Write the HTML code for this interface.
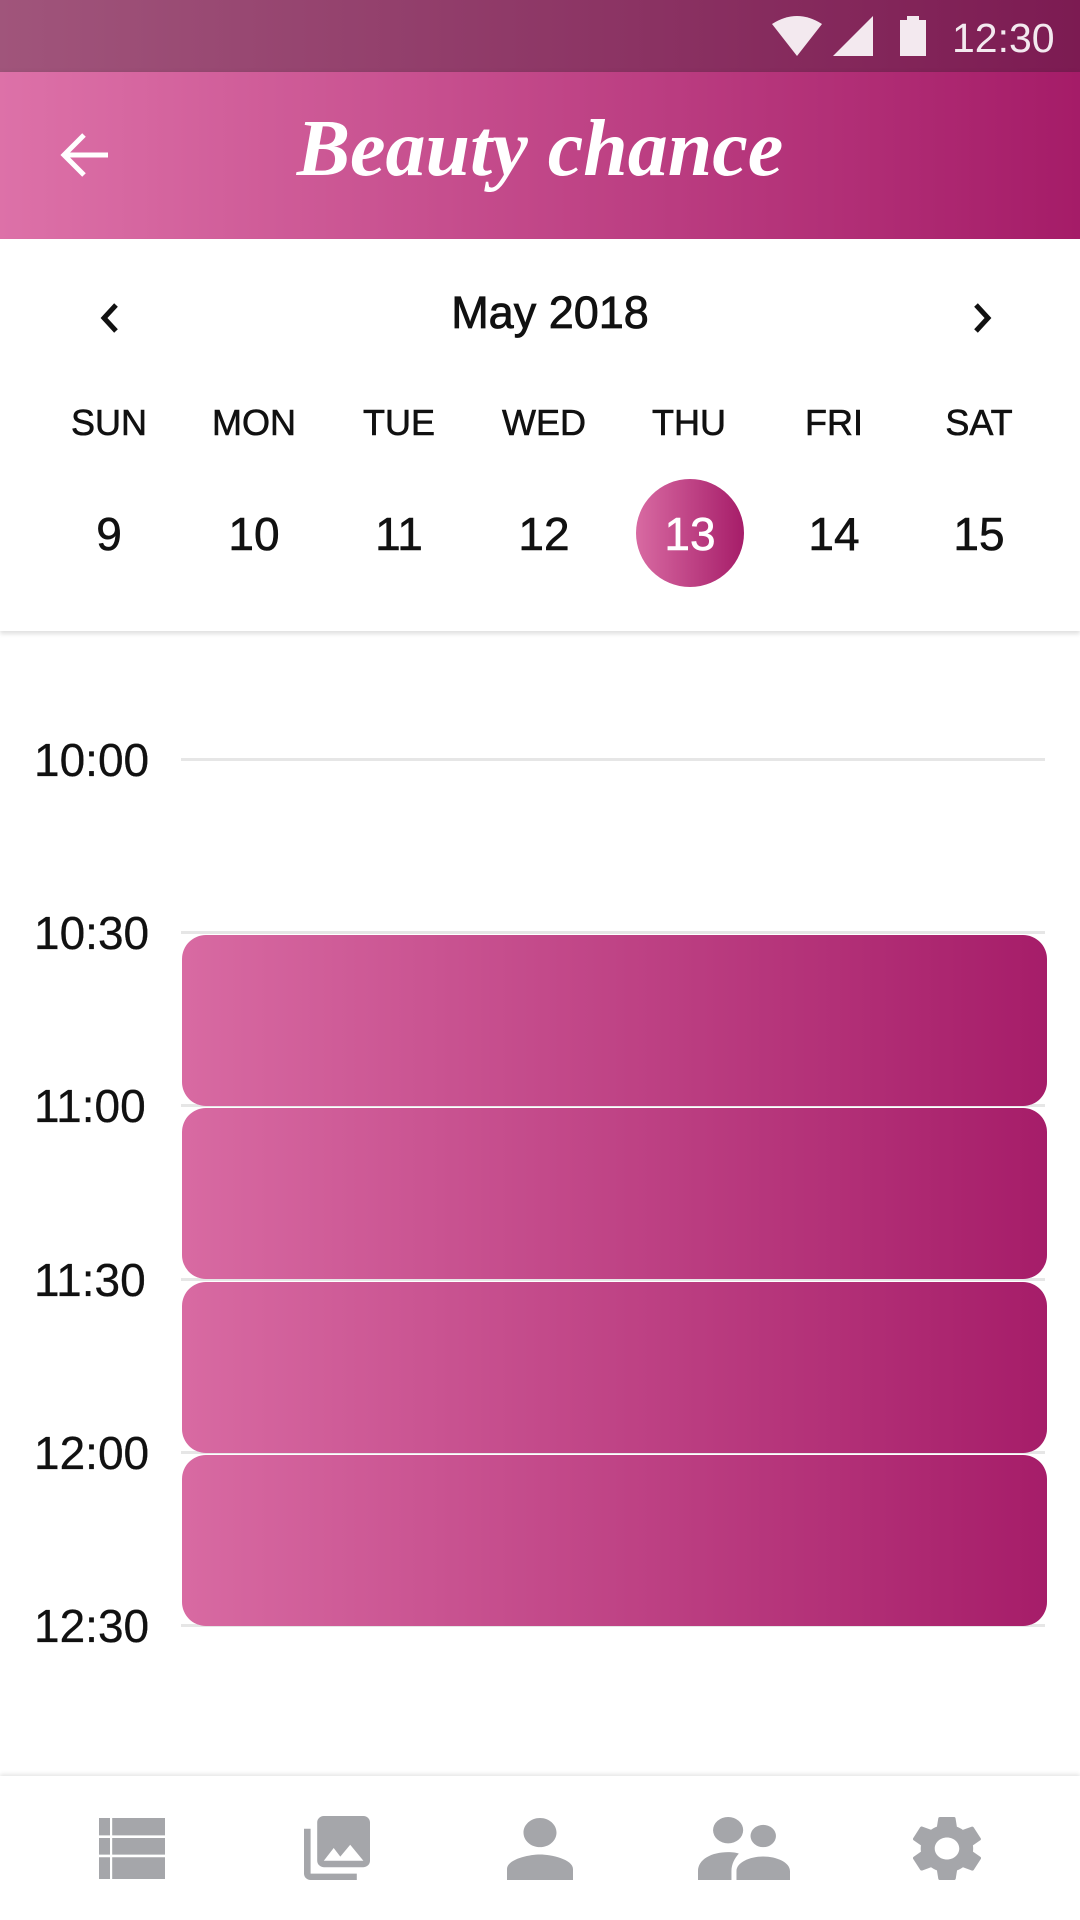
<!DOCTYPE html>
<html><head><meta charset="utf-8"><style>
*{margin:0;padding:0;box-sizing:border-box}
body{width:1080px;height:1920px;position:relative;background:#fff;font-family:"Liberation Sans",sans-serif;overflow:hidden}
.sb{position:absolute;left:0;top:0;width:1080px;height:72px;background:linear-gradient(90deg,#a0557b,#7c1b52)}
.hd{position:absolute;left:0;top:72px;width:1080px;height:167px;background:linear-gradient(90deg,#dd71a8,#a51c68);box-shadow:0 3px 6px rgba(0,0,0,.25)}
.title{position:absolute;left:0;width:1080px;top:32px;text-align:center;color:#fff;font:italic bold 80px "Liberation Serif",serif}
.cal{position:absolute;left:0;top:239px;width:1080px;height:392px;background:#fff;box-shadow:0 3px 4px rgba(0,0,0,.12)}
.t{position:absolute;text-align:center;width:140px;margin-left:-70px;color:#111;-webkit-text-stroke:0.6px #111}
.time{position:absolute;left:34px;font-size:46px;color:#111;-webkit-text-stroke:0.3px #111}
.line{position:absolute;left:181px;width:864px;height:3px;background:#e6e6e6}
.blk{position:absolute;left:182px;width:865px;height:171px;border-radius:24px;background:linear-gradient(90deg,#d86aa2,#a61d69)}
.nav{position:absolute;left:0;top:1776px;width:1080px;height:144px;background:#fff;box-shadow:0 -2px 4px rgba(0,0,0,.1)}
.ic{position:absolute}
</style></head><body>
<div class="sb">
<svg style="position:absolute;left:770px;top:14px" width="290" height="44" viewBox="0 0 290 44">
<path d="M2 10 Q27 -6 52 10 L27 42 Z" fill="#f3e9ef"/>
<path d="M63 42 L103 2 L103 42 Z" fill="#f3e9ef"/>
<rect x="130" y="6" width="26" height="36" fill="#f3e9ef"/><rect x="137" y="2" width="12" height="5" fill="#f3e9ef"/>
<text x="182" y="38" font-family="Liberation Sans" font-size="41" fill="#f3e9ef">12:30</text>
</svg>
</div>
<div class="hd">
<svg style="position:absolute;left:58px;top:58px" width="54" height="50" viewBox="0 0 54 50"><path d="M50 25 H8 M26 5 L6 25 L26 45" stroke="#fff" stroke-width="5" fill="none"/></svg>
<div class="title">Beauty chance</div>
</div>
<div class="cal">
<svg style="position:absolute;left:98px;top:62px" width="24" height="34"><path d="M18 4 L6 17 L18 30" stroke="#111" stroke-width="5" fill="none"/></svg>
<svg style="position:absolute;left:970px;top:62px" width="24" height="34"><path d="M6 4 L18 17 L6 30" stroke="#111" stroke-width="5" fill="none"/></svg>
<div style="position:absolute;left:0;width:1100px;top:48px;text-align:center;font-size:45px;color:#111;-webkit-text-stroke:0.8px #111">May 2018</div>
<div class="t" style="left:109px;top:163px;font-size:36px">SUN</div>
<div class="t" style="left:254px;top:163px;font-size:36px">MON</div>
<div class="t" style="left:399px;top:163px;font-size:36px">TUE</div>
<div class="t" style="left:544px;top:163px;font-size:36px">WED</div>
<div class="t" style="left:689px;top:163px;font-size:36px">THU</div>
<div class="t" style="left:834px;top:163px;font-size:36px">FRI</div>
<div class="t" style="left:979px;top:163px;font-size:36px">SAT</div>
<div style="position:absolute;left:636px;top:240px;width:108px;height:108px;border-radius:50%;background:linear-gradient(90deg,#d86aa2,#a61d69)"></div>
<div class="t" style="left:109px;top:268px;font-size:46px">9</div>
<div class="t" style="left:254px;top:268px;font-size:46px">10</div>
<div class="t" style="left:399px;top:268px;font-size:46px">11</div>
<div class="t" style="left:544px;top:268px;font-size:46px">12</div>
<div class="t" style="left:690px;top:268px;font-size:46px;color:#fff;-webkit-text-stroke:0.6px #fff">13</div>
<div class="t" style="left:834px;top:268px;font-size:46px">14</div>
<div class="t" style="left:979px;top:268px;font-size:46px">15</div>
</div>
<div class="time" style="top:733px">10:00</div><div class="line" style="top:758px"></div>
<div class="time" style="top:906px">10:30</div><div class="line" style="top:931px"></div>
<div class="time" style="top:1079px">11:00</div><div class="line" style="top:1104px"></div>
<div class="time" style="top:1253px">11:30</div><div class="line" style="top:1278px"></div>
<div class="time" style="top:1426px">12:00</div><div class="line" style="top:1451px"></div>
<div class="time" style="top:1599px">12:30</div><div class="line" style="top:1624px"></div>
<div class="blk" style="top:935px"></div>
<div class="blk" style="top:1108px"></div>
<div class="blk" style="top:1282px"></div>
<div class="blk" style="top:1455px"></div>
<div class="nav"></div>
<svg class="ic" style="left:99px;top:1818px" width="66" height="61" viewBox="3 5 18 14" preserveAspectRatio="none" fill="#a5a6aa"><path d="M3 5h3v4H3zM6.6 5H21v4H6.6zM3 9.6h3v3.8H3zM6.6 9.6H21v3.8H6.6zM3 14h3v5H3zM6.6 14H21v5H6.6z"/></svg>
<svg class="ic" style="left:304px;top:1816px" width="66" height="64" viewBox="2 2 20 20" preserveAspectRatio="none" fill="#a5a6aa"><path d="M22 16V4c0-1.1-.9-2-2-2H8c-1.1 0-2 .9-2 2v12c0 1.1.9 2 2 2h12c1.1 0 2-.9 2-2zm-11-4l2 2.7 3-3.7 4 5H8l3-4zM2 6v14c0 1.1.9 2 2 2h14v-2H4V6H2z"/></svg>
<svg class="ic" style="left:507px;top:1818px" width="66" height="62" viewBox="4 4 16 17" preserveAspectRatio="none" fill="#a5a6aa"><path d="M12 12c2.2 0 4-1.8 4-4s-1.8-4-4-4-4 1.8-4 4 1.8 4 4 4zm0 2c-2.7 0-8 1.3-8 4v3h16v-3c0-2.7-5.3-4-8-4z"/></svg>
<svg class="ic" style="left:698px;top:1817px" width="92" height="63" viewBox="1 1.5 27.5 21.5" preserveAspectRatio="none" fill="#a5a6aa"><circle cx="10" cy="6" r="4.5"/><circle cx="20.5" cy="8" r="3.8"/><path d="M1 23v-3c0-4 4-6.5 9-6.5 1.5 0 2.5.2 3.2.5C12 15.5 11 17.5 11 20v3zM12.5 23v-3c0-3 4-5 8-5s8 2 8 5v3z"/></svg>
<svg class="ic" style="left:913px;top:1817px" width="68" height="63" viewBox="2.3 2 19.4 20" preserveAspectRatio="none" fill="#a5a6aa"><path d="M19.4 13c.04-.3.06-.6.06-1s-.02-.7-.07-1l2.1-1.6c.2-.15.25-.42.12-.64l-2-3.46c-.12-.22-.39-.3-.61-.22l-2.49 1c-.52-.4-1.08-.73-1.69-.98l-.38-2.65A.49.49 0 0 0 14 2h-4c-.25 0-.46.18-.49.42l-.38 2.65c-.61.25-1.17.59-1.69.98l-2.49-1c-.23-.09-.49 0-.61.22l-2 3.46c-.13.22-.07.49.12.64L4.57 11c-.04.3-.07.66-.07 1s.02.7.07 1l-2.11 1.65c-.19.15-.24.42-.12.64l2 3.46c.12.22.39.3.61.22l2.49-1c.52.4 1.08.73 1.69.98l.38 2.65c.03.24.24.42.49.42h4c.25 0 .46-.18.49-.42l.38-2.65c.61-.25 1.17-.59 1.69-.98l2.49 1c.23.09.49 0 .61-.22l2-3.46c.12-.22.07-.49-.12-.64L19.4 13zM12 15.5c-1.93 0-3.5-1.57-3.5-3.5s1.57-3.5 3.5-3.5 3.5 1.57 3.5 3.5-1.57 3.5-3.5 3.5z"/></svg>
</body></html>
